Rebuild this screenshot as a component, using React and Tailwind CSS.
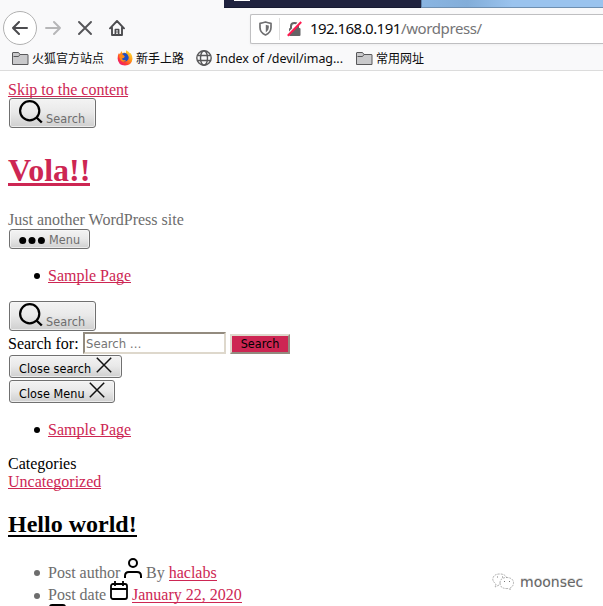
import React from "react";

const UI = "font-['DejaVu_Sans_Condensed','DejaVu_Sans',sans-serif]";
const link = "text-[#cd2653] border-b border-[#cd2653]";

function Folder() {
  return (
    <svg className="shrink-0" width="17" height="15" viewBox="0 0 17 15">
      <path d="M.5 13.500V2q0-.5.5-.5h5.500l1.500 2h7.500q.5 0 .5.500v9.500z" fill="#c9c9cb" stroke="#58585a" />
      <path d="M1.500 5.500h5l1.500-2h7.500" fill="none" stroke="#58585a" />
    </svg>
  );
}

function Firefox() {
  return (
    <svg className="shrink-0" width="16" height="16" viewBox="0 0 16 16">
      <defs>
        <linearGradient id="fx" x1="1" y1="0" x2="0.2" y2="1">
          <stop offset="0" stopColor="#fff044" />
          <stop offset="0.45" stopColor="#ff9a18" />
          <stop offset="0.75" stopColor="#ff3b35" />
          <stop offset="1" stopColor="#e5167c" />
        </linearGradient>
      </defs>
      <path d="M1 5l1-2 .8 1.300L4.500 1l1 2.200Q7 2 9 3L9 .300q3 1.200 4 3.200l.7-.5Q15.500 6 15.500 9q-.8 6.300-7.500 6.600Q1 15.300.6 8.500z" fill="url(#fx)" />
      <path d="M5 4q3-2 5.500.5Q12 6.500 11.500 9 10 12 7 11.500 4.500 10.500 4.500 8L7.500 7 7 5.500z" fill="#214fc1" />
      <path d="M2.500 4.500l2.500.2 1.500 1.500L8 6.500 6.500 8l-2 .7 2 1.500L9 10q-2 3-4.500 1Q2 9 2.500 4.500z" fill="#ff8b16" />
    </svg>
  );
}

function Globe() {
  return (
    <svg className="shrink-0" width="16" height="16" viewBox="0 0 16 16" fill="none" stroke="#58585a" strokeWidth="1.400">
      <circle cx="8" cy="8" r="7.200" />
      <ellipse cx="8" cy="8" rx="3.500" ry="7.200" />
      <path d="M1.500 5.500h13M1.500 10.500h13" />
    </svg>
  );
}

function SearchIcon() {
  return (
    <svg className="block shrink-0" width="24" height="24" viewBox="0 0 24 24" fill="none" stroke="#000" strokeWidth="2.200">
      <circle cx="10.700" cy="10.800" r="9.600" />
      <path d="M17.500 17.500l5.300 5" strokeWidth="2.400" />
    </svg>
  );
}

function Cross() {
  return (
    <svg className="block shrink-0" width="16" height="16" viewBox="0 0 16 16" fill="none" stroke="#111" strokeWidth="1.500">
      <path d="M.8.800l14.400 14.400M15.200.800L.8 15.200" />
    </svg>
  );
}

function Button({ className, children }) {
  return (
    <button
      className={`ml-px flex shrink-0 rounded-[3px] border border-[#707070] bg-linear-to-b from-[#f3f3f3] from-0% via-[#e9e9e9] via-48% to-[#cfcfcf] pl-[9px] text-[12.5px] leading-[16px] shadow-[inset_0_0_0_1px_#f8f8f8b0] ${UI} ${className}`}
    >
      {children}
    </button>
  );
}

function SearchToggle({ className }) {
  return (
    <Button className={`h-[30px] w-[87px] text-[#6d6d6d] ${className}`}>
      <span className="mt-[1px]"><SearchIcon /></span>
      <span className="ml-[3px] mt-[12px] tracking-[0.1px]">Search</span>
    </Button>
  );
}

function SamplePage({ className }) {
  return (
    <ul className={`flex h-[18px] shrink-0 items-start pl-[26px] ${className}`}>
      <li className="flex items-start">
        <span className="mr-[8px] mt-[7px] h-[6px] w-[6px] rounded-full bg-black" />
        <a className={`h-[17px] leading-[20px] ${link}`}>Sample Page</a>
      </li>
    </ul>
  );
}

function Browser() {
  return (
    <header className="flex h-[71px] shrink-0 flex-col border-b border-[#dcdcdc] bg-[#f9f9fa]">
      <div className="flex h-[8px] shrink-0 pl-[224px]">
        <div className="h-full w-[197px] border-b border-[#171a31] bg-[#20233f] pl-[10px]">
          <div className="h-px w-[16px] bg-white" />
        </div>
        <div className="h-full w-[37px] flex-1 border-b border-[#6e8fb1] border-l border-l-[#6084ac] bg-linear-to-r from-[#8ab5e2] via-[#82add9] via-25% to-[#9ac3ee] to-50%" />
      </div>
      <div className="flex h-[40px] shrink-0 items-center">
        <div className="ml-[3px] flex h-[34px] w-[34px] shrink-0 items-center justify-center rounded-full border border-[#b1b1b1] bg-white">
          <svg width="16" height="14" viewBox="0 0 16 14" fill="none" stroke="#4c4c4f" strokeWidth="2" strokeLinecap="round" strokeLinejoin="round">
            <path d="M7 1L1 7l6 6M1 7h14" />
          </svg>
        </div>
        <svg className="ml-[8px] shrink-0" width="16" height="14" viewBox="0 0 16 14" fill="none" stroke="#b6b6b7" strokeWidth="1.900" strokeLinecap="round" strokeLinejoin="round">
          <path d="M9 1l6 6-6 6M15 7H1" />
        </svg>
        <svg className="ml-[17px] shrink-0" width="14" height="14" viewBox="0 0 14 14" fill="none" stroke="#555558" strokeWidth="1.900" strokeLinecap="round">
          <path d="M1 1l12 12M13 1L1 13" />
        </svg>
        <svg className="ml-[17px] shrink-0" width="16" height="16" viewBox="0 0 16 16" fill="none" stroke="#4c4c4f" strokeWidth="1.900" strokeLinecap="round" strokeLinejoin="round">
          <path d="M1 8.300L8 1l7 7.300M3 7.500V15h10V7.500" />
          <path d="M6.300 15V9.500h3.400V15" strokeWidth="1.500" />
          <path d="M8 11v2" strokeWidth="1" />
        </svg>
        <div className="ml-[125px] mt-px flex h-[30px] flex-1 items-center rounded-l-[2px] border border-r-0 border-[#bfbfc1] bg-white shadow-[0_1px_3px_#0000000c]">
          <svg className="ml-[8px] shrink-0" width="13" height="15" viewBox="0 0 13 15">
            <path d="M1 2.300Q4 2 6.500 1 9 2 12 2.300v4.200Q12 11.500 6.500 14 1 11.500 1 6.500z" fill="none" stroke="#6f6f71" strokeWidth="1.700" strokeLinejoin="round" />
            <path d="M6.800 3.700q1.700.7 3 .9v2.200q0 3-3 4.600z" fill="#6f6f71" />
          </svg>
          <div className="ml-[7px] h-[22px] w-px shrink-0 bg-[#dedede]" />
          <svg className="ml-[7px] shrink-0" width="15" height="16" viewBox="0 0 15 16">
            <path d="M4 8V5.200Q4 2 7.500 2T11 5.200V8" fill="none" stroke="#646466" strokeWidth="2" />
            <rect x="2" y="7" width="11.500" height="8" rx="1" fill="#646466" />
            <path d="M.8 13.800L13.300.400" stroke="#fff" strokeWidth="2.500" />
            <path d="M.8 14.800L14.200 1" stroke="#ff194f" strokeWidth="2" />
          </svg>
          <div className="-mt-px ml-[8px] flex font-['Noto_Sans','Open_Sans',sans-serif] text-[15px] leading-[22px]">
            <span className="w-[91px] whitespace-nowrap tracking-[-0.550px] text-[#0c0c0d]">192.168.0.191</span>
            <span className="whitespace-nowrap tracking-[-0.400px] text-[#747476]">/wordpress/</span>
          </div>
        </div>
      </div>
      <nav className="flex h-[20px] shrink-0 items-center whitespace-nowrap pl-[12px] font-['Noto_Sans','Noto_Sans_CJK_SC',sans-serif] text-[12px] text-[#0c0c0d]">
        <Folder />
        <span className="ml-[3px] mt-[2px] w-[85px]">火狐官方站点</span>
        <Firefox />
        <span className="ml-[3px] mt-[2px] w-[60px]">新手上路</span>
        <Globe />
        <span className="ml-[4px] mt-px w-[140px] text-[12.500px] tracking-[-0.030px]">Index of /devil/imag...</span>
        <Folder />
        <span className="ml-[3px] mt-[2px]">常用网址</span>
      </nav>
    </header>
  );
}

export default function App() {
  return (
    <div className="relative flex h-[606px] w-[603px] flex-col overflow-hidden bg-white font-['Liberation_Serif',serif] text-[16px] leading-[18px] text-black">
      <Browser />
      <main className="flex flex-col items-start pl-[8px]">
        <a className={`mt-[9px] h-[17px] shrink-0 leading-[20px] ${link}`}>Skip to the content</a>
        <SearchToggle className="mt-px" />
        <h1 className="mt-[24px] h-[34px] border-b-[3px] border-[#cd2653] text-[32px] font-bold leading-[36px] text-[#cd2653]">Vola!!</h1>
        <p className="mt-[24px] h-[18px] leading-[20px] text-[#6d6d6d]">Just another WordPress site</p>
        <Button className="mt-px h-[20px] w-[81px] text-[#6d6d6d]">
          <svg className="mt-[7px]" width="27" height="8" viewBox="0 0 27 8">
            <circle cx="3.700" cy="3.500" r="3.500" />
            <circle cx="13" cy="3.500" r="3.500" />
            <circle cx="22.400" cy="3.500" r="3.500" />
          </svg>
          <span className="ml-[3px] mt-[2px] tracking-[0.100px]">Menu</span>
        </Button>
        <SamplePage className="mt-[17px]" />
        <SearchToggle className="mt-[17px]" />
        <div className="mt-px flex h-[22px] shrink-0 items-center">
          <label className="mt-px w-[75px]">Search for:</label>
          <input
            className={`h-[22px] w-[143px] border-2 border-b-[#ded8cc] border-l-[#938b7f] border-r-[#ded8cc] border-t-[#938b7f] px-[1px] text-[13px] placeholder:text-[#757575] ${UI}`}
            placeholder="Search …"
          />
          <button className={`ml-[4px] mt-px h-[20px] w-[60px] border-2 border-b-[#938b7f] border-l-[#ded8cc] border-r-[#938b7f] border-t-[#ded8cc] bg-[#cd2653] text-[12.5px] leading-[16px] ${UI}`}>Search</button>
        </div>
        <Button className="mt-px h-[23px] w-[113px]">
          <span className="mt-[5px] w-[77px] whitespace-nowrap text-left tracking-[0.050px]">Close search</span>
          <span className="mt-[1px]"><Cross /></span>
        </Button>
        <Button className="mt-[2px] h-[23px] w-[106px]">
          <span className="mt-[5px] w-[70px] whitespace-nowrap text-left tracking-[0.050px]">Close Menu</span>
          <span className="mt-[1px]"><Cross /></span>
        </Button>
        <SamplePage className="mt-[17px]" />
        <p className="mt-[16px] h-[18px] leading-[20px]">Categories</p>
        <a className={`h-[17px] leading-[20px] ${link}`}>Uncategorized</a>
        <h2 className="mt-[21px] h-[27px] border-b-2 border-black text-[24px] font-bold leading-[28px]">Hello world!</h2>
        <ul className="mt-[21px] flex flex-col pl-[26px] text-[#6d6d6d]">
          <li className="flex h-[24px] items-end">
            <span className="mb-[6px] mr-[8px] h-[6px] w-[6px] rounded-full bg-[#6d6d6d]" />
            <span className="w-[76px]">Post author</span>
            <svg className="mb-[4px] shrink-0" width="18" height="20" viewBox="0 0 18 20" fill="none" stroke="#000" strokeWidth="2">
              <circle cx="9" cy="5" r="4" />
              <path d="M1 20v-2q0-4 4-4h8q4 0 4 4v2" />
            </svg>
            <span className="ml-[4px] mr-[4px]">By</span>
            <a className={`mb-px h-[17px] ${link}`}>haclabs</a>
          </li>
          <li className="flex h-[22px] items-end">
            <span className="mb-[5px] mr-[8px] h-[6px] w-[6px] rounded-full bg-[#6d6d6d]" />
            <span className="w-[62px]">Post date</span>
            <svg className="mb-[4px] shrink-0" width="18" height="19" viewBox="0 0 18 19" fill="none" stroke="#000" strokeWidth="1.800">
              <rect x="1" y="3" width="16" height="15" rx="2" />
              <path d="M1 8h16M5 0v5M13 0v5" />
            </svg>
            <a className={`mb-px ml-[4px] h-[17px] ${link}`}>January 22, 2020</a>
          </li>
          <li className="ml-[15px] h-[6px] w-[17px] shrink-0 rounded-t-[3px] border-2 border-black" />
        </ul>
      </main>
      <div className="absolute left-[491px] top-[571px] flex items-center font-['DejaVu_Sans',sans-serif] text-[14px] leading-[22px] text-[#666] [text-shadow:0_-1px_0_#ddd]">
        <svg width="24" height="20" viewBox="0 0 24 20" fill="none" stroke="#999" strokeWidth="0.800" strokeDasharray="2 1">
          <path d="M8 13l-4 2 1-3Q1 9 2 6q1-4 7-4 5 0 7 4" />
          <path d="M9 11q0-5 6-5.500 7 0 7.500 5 0 4-3.500 5.500l.5 1.500-2.500-1Q9 17 9 11z" />
          <path d="M6 5h1M11 5h1M13 9l1 1M18 9l1 1" stroke="#555" />
        </svg>
        <span className="ml-[5px]">moonsec</span>
      </div>
    </div>
  );
}
